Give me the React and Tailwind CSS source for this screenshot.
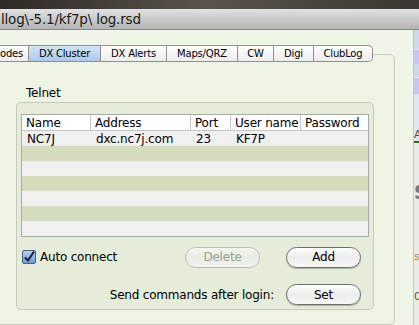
const font = { fontFamily: '"DejaVu Sans", Verdana, sans-serif' };

const tabs = [
  { label: 'odes', w: 'w-[35px]', pad: 'pl-[6px] text-left' },
  { label: 'DX Cluster', w: 'w-[72px]', active: true },
  { label: 'DX Alerts', w: 'w-[66px]' },
  { label: 'Maps/QRZ', w: 'w-[71px]' },
  { label: 'CW', w: 'w-[36px]' },
  { label: 'Digi', w: 'w-[40px]' },
  { label: 'ClubLog', w: 'w-[59px]', last: true },
];

const cols = [
  { label: 'Name', w: 'w-[69px]' },
  { label: 'Address', w: 'w-[100px]' },
  { label: 'Port', w: 'w-[40px]' },
  { label: 'User name', w: 'w-[70px]' },
  { label: 'Password', w: 'flex-1' },
];

const rows = [
  ['NC7J', 'dxc.nc7j.com', '23', 'KF7P', ''],
  [], [], [], [], [], [],
];

function AquaButton({ children, disabled }) {
  return (
    <button
      type="button"
      className={
        'w-[75px] h-[21px] rounded-full border text-[12px] leading-none flex items-center justify-center ' +
        (disabled
          ? 'border-[#b9bfb3] bg-gradient-to-b from-[#f4f6f1] via-[#e9ede4] to-[#f2f4ef] text-[#9aa095]'
          : 'border-[#6e6e6e] bg-gradient-to-b from-white via-[#ececec] to-[#f7f7f7] text-black shadow-[0_1px_1px_rgba(0,0,0,0.25)]')
      }
    >
      {children}
    </button>
  );
}

export default function App() {
  return (
    <div className="w-[419px] h-[325px] overflow-hidden flex flex-col bg-[#eff6e7] tracking-[-0.2px]" style={font}>
      {/* desktop photo behind window */}
      <div className="h-[9px] shrink-0 bg-gradient-to-r from-[#2e2a26] via-[#5a544c] to-[#3a3631]" />

      {/* title bar */}
      <div className="h-[21px] shrink-0 flex items-center bg-gradient-to-b from-[#e2e2e2] to-[#b4b4b4] border-b border-[#8a8a8a] text-[13.5px] text-[#1a1a1a] pl-[1px]">
        llog\-5.1/kf7p\ log.rsd
      </div>

      <div className="flex flex-1 min-h-0">
        {/* window body */}
        <div className="w-[414px] shrink-0 flex flex-col pt-[15px] border-r border-[#c4cabd]">
          {/* tabs */}
          <div className="relative z-10 flex ml-[-6px] h-[17px]">
            {tabs.map((t) => (
              <div
                key={t.label}
                className={
                  t.w +
                  ' h-[17px] flex items-center text-[10px] border-y border-r border-[#8f8f8f] ' +
                  (t.pad || 'justify-center') +
                  (t.active
                    ? ' bg-gradient-to-b from-[#d4e4f8] to-[#a9c9ee] text-black'
                    : ' bg-gradient-to-b from-white to-[#ececec] text-black') +
                  (t.last ? ' rounded-r-[5px]' : '')
                }
              >
                {t.label}
              </div>
            ))}
          </div>

          {/* tab panel */}
          <div className="ml-[-10px] w-[405px] flex-1 -mt-[8px] border border-[#c6ccbe] rounded-[5px] bg-[#edf4e4] pt-[32px] pl-[25px]">
            <div className="text-[12px] text-black leading-none mb-[3px] pl-[10px]">Telnet</div>

            {/* group box */}
            <div className="w-[358px] h-[208px] border border-[#c3c9bb] rounded-[5px] bg-[#e5ecda] pt-[11px] px-[4px]">
              <div className="w-[348px] border border-[#a9a9a9] bg-[#f0f0f0]">
                <div className="flex h-[16px] bg-white border-b border-[#c6c6c6] text-[12px] text-black">
                  {cols.map((c, i) => (
                    <div
                      key={c.label}
                      className={c.w + ' flex items-center pl-[4px] ' + (i < cols.length - 1 ? 'border-r border-[#c6c6c6]' : '')}
                    >
                      {c.label}
                    </div>
                  ))}
                </div>
                {rows.map((r, ri) => (
                  <div key={ri} className={'flex h-[15px] text-[12px] text-black ' + (ri % 2 ? 'bg-[#d3ddbd]' : 'bg-[#f0f0f0]')}>
                    {cols.map((c, ci) => (
                      <div key={c.label} className={c.w + ' flex items-center pl-[5px]'}>
                        {r[ci] || ''}
                      </div>
                    ))}
                  </div>
                ))}
              </div>

              {/* auto connect + buttons */}
              <div className="flex items-center mt-[9px] h-[22px]">
                <div className="w-[14px] h-[14px] ml-[1px] rounded-[2px] border border-[#4a5f86] bg-gradient-to-b from-[#b8d2f4] to-[#6b9be0] flex items-center justify-center">
                  <svg width="12" height="12" viewBox="0 0 12 12">
                    <path d="M2 6.5 L5 9.5 L11 0.5" fill="none" stroke="#1b1b2e" strokeWidth="2" />
                  </svg>
                </div>
                <span className="ml-[4px] text-[12px] text-black">Auto connect</span>
                <div className="ml-auto flex gap-[26px] mr-[8px]">
                  <AquaButton disabled>Delete</AquaButton>
                  <AquaButton>Add</AquaButton>
                </div>
              </div>

              <div className="flex items-center justify-end mt-[16px] mr-[8px] gap-[12px]">
                <span className="text-[12px] text-black">Send commands after login:</span>
                <AquaButton>Set</AquaButton>
              </div>
            </div>
          </div>
        </div>

        {/* neighbouring window sliver */}
        <div className="flex-1 flex flex-col bg-[#e9ebe6] text-[11px] text-[#555] overflow-hidden leading-none">
          <div className="h-[20px] shrink-0 bg-[#cdd9ea] border-b border-[#e8ecf0]" />
          <div className="h-[14px] shrink-0 bg-[#c6c6f0]" />
          <div className="h-[14px] shrink-0 bg-[#cdd9ea] border-b border-[#e8ecf0]" />
          <div className="h-[16px] shrink-0 bg-[#c6c6f0]" />
          <div className="h-[47px] shrink-0 bg-[#dfe6ee] flex items-end pb-[1px]">A</div>
          <div className="h-[2px] shrink-0 bg-[#2f6a1e]" />
          <div className="h-[40px] shrink-0" />
          <div className="h-[16px] shrink-0 text-[19px] font-bold text-[#777]">S</div>
          <div className="h-[52px] shrink-0" />
          <div className="h-[12px] shrink-0 text-[#b08a30]">s</div>
          <div className="h-[28px] shrink-0" />
          <div className="h-[12px] shrink-0">0</div>
        </div>
      </div>
    </div>
  );
}
